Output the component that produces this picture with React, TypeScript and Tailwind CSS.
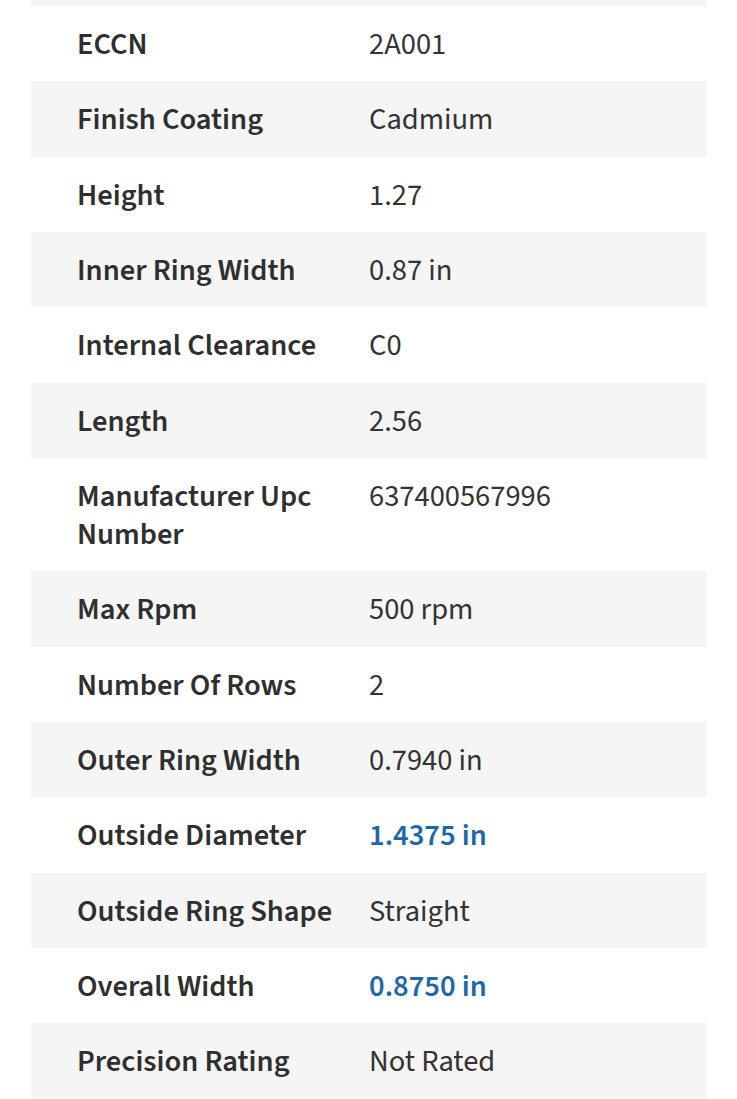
type Spec = { label: string; value: string; link?: boolean };

const specs: Spec[] = [
  { label: "ECCN", value: "2A001" },
  { label: "Finish Coating", value: "Cadmium" },
  { label: "Height", value: "1.27" },
  { label: "Inner Ring Width", value: "0.87 in" },
  { label: "Internal Clearance", value: "C0" },
  { label: "Length", value: "2.56" },
  { label: "Manufacturer Upc Number", value: "637400567996" },
  { label: "Max Rpm", value: "500 rpm" },
  { label: "Number Of Rows", value: "2" },
  { label: "Outer Ring Width", value: "0.7940 in" },
  { label: "Outside Diameter", value: "1.4375 in", link: true },
  { label: "Outside Ring Shape", value: "Straight" },
  { label: "Overall Width", value: "0.8750 in", link: true },
  { label: "Precision Rating", value: "Not Rated" },
];

export default function App() {
  return (
    <div className="min-h-[1099px] bg-white font-['Source_Sans_3','Lato',sans-serif] text-[30.5px] leading-[38px] text-[#333]">
      <div className="ml-[31px] mr-[30px]">
        {/* tail of the row above */}
        <div className="h-[6px] bg-[#f5f5f5]" />
        {specs.map((s, i) => (
          <div
            key={s.label}
            className={`flex pt-[20px] pb-[17.33px] ${i % 2 === 1 ? "bg-[#f5f5f5]" : "bg-white"}`}
          >
            <div className="w-[337px] shrink-0 pl-[46px] pr-[20px] font-semibold text-[#2f2f2f]">
              {s.label}
            </div>
            <div
              className={`flex-1 pl-[1px] ${
                s.link ? "font-semibold text-[#1f68a7]" : "font-normal text-[#333]"
              }`}
            >
              {s.value}
            </div>
          </div>
        ))}
      </div>
      <div className="h-[2px] bg-[#ececec]" />
    </div>
  );
}
